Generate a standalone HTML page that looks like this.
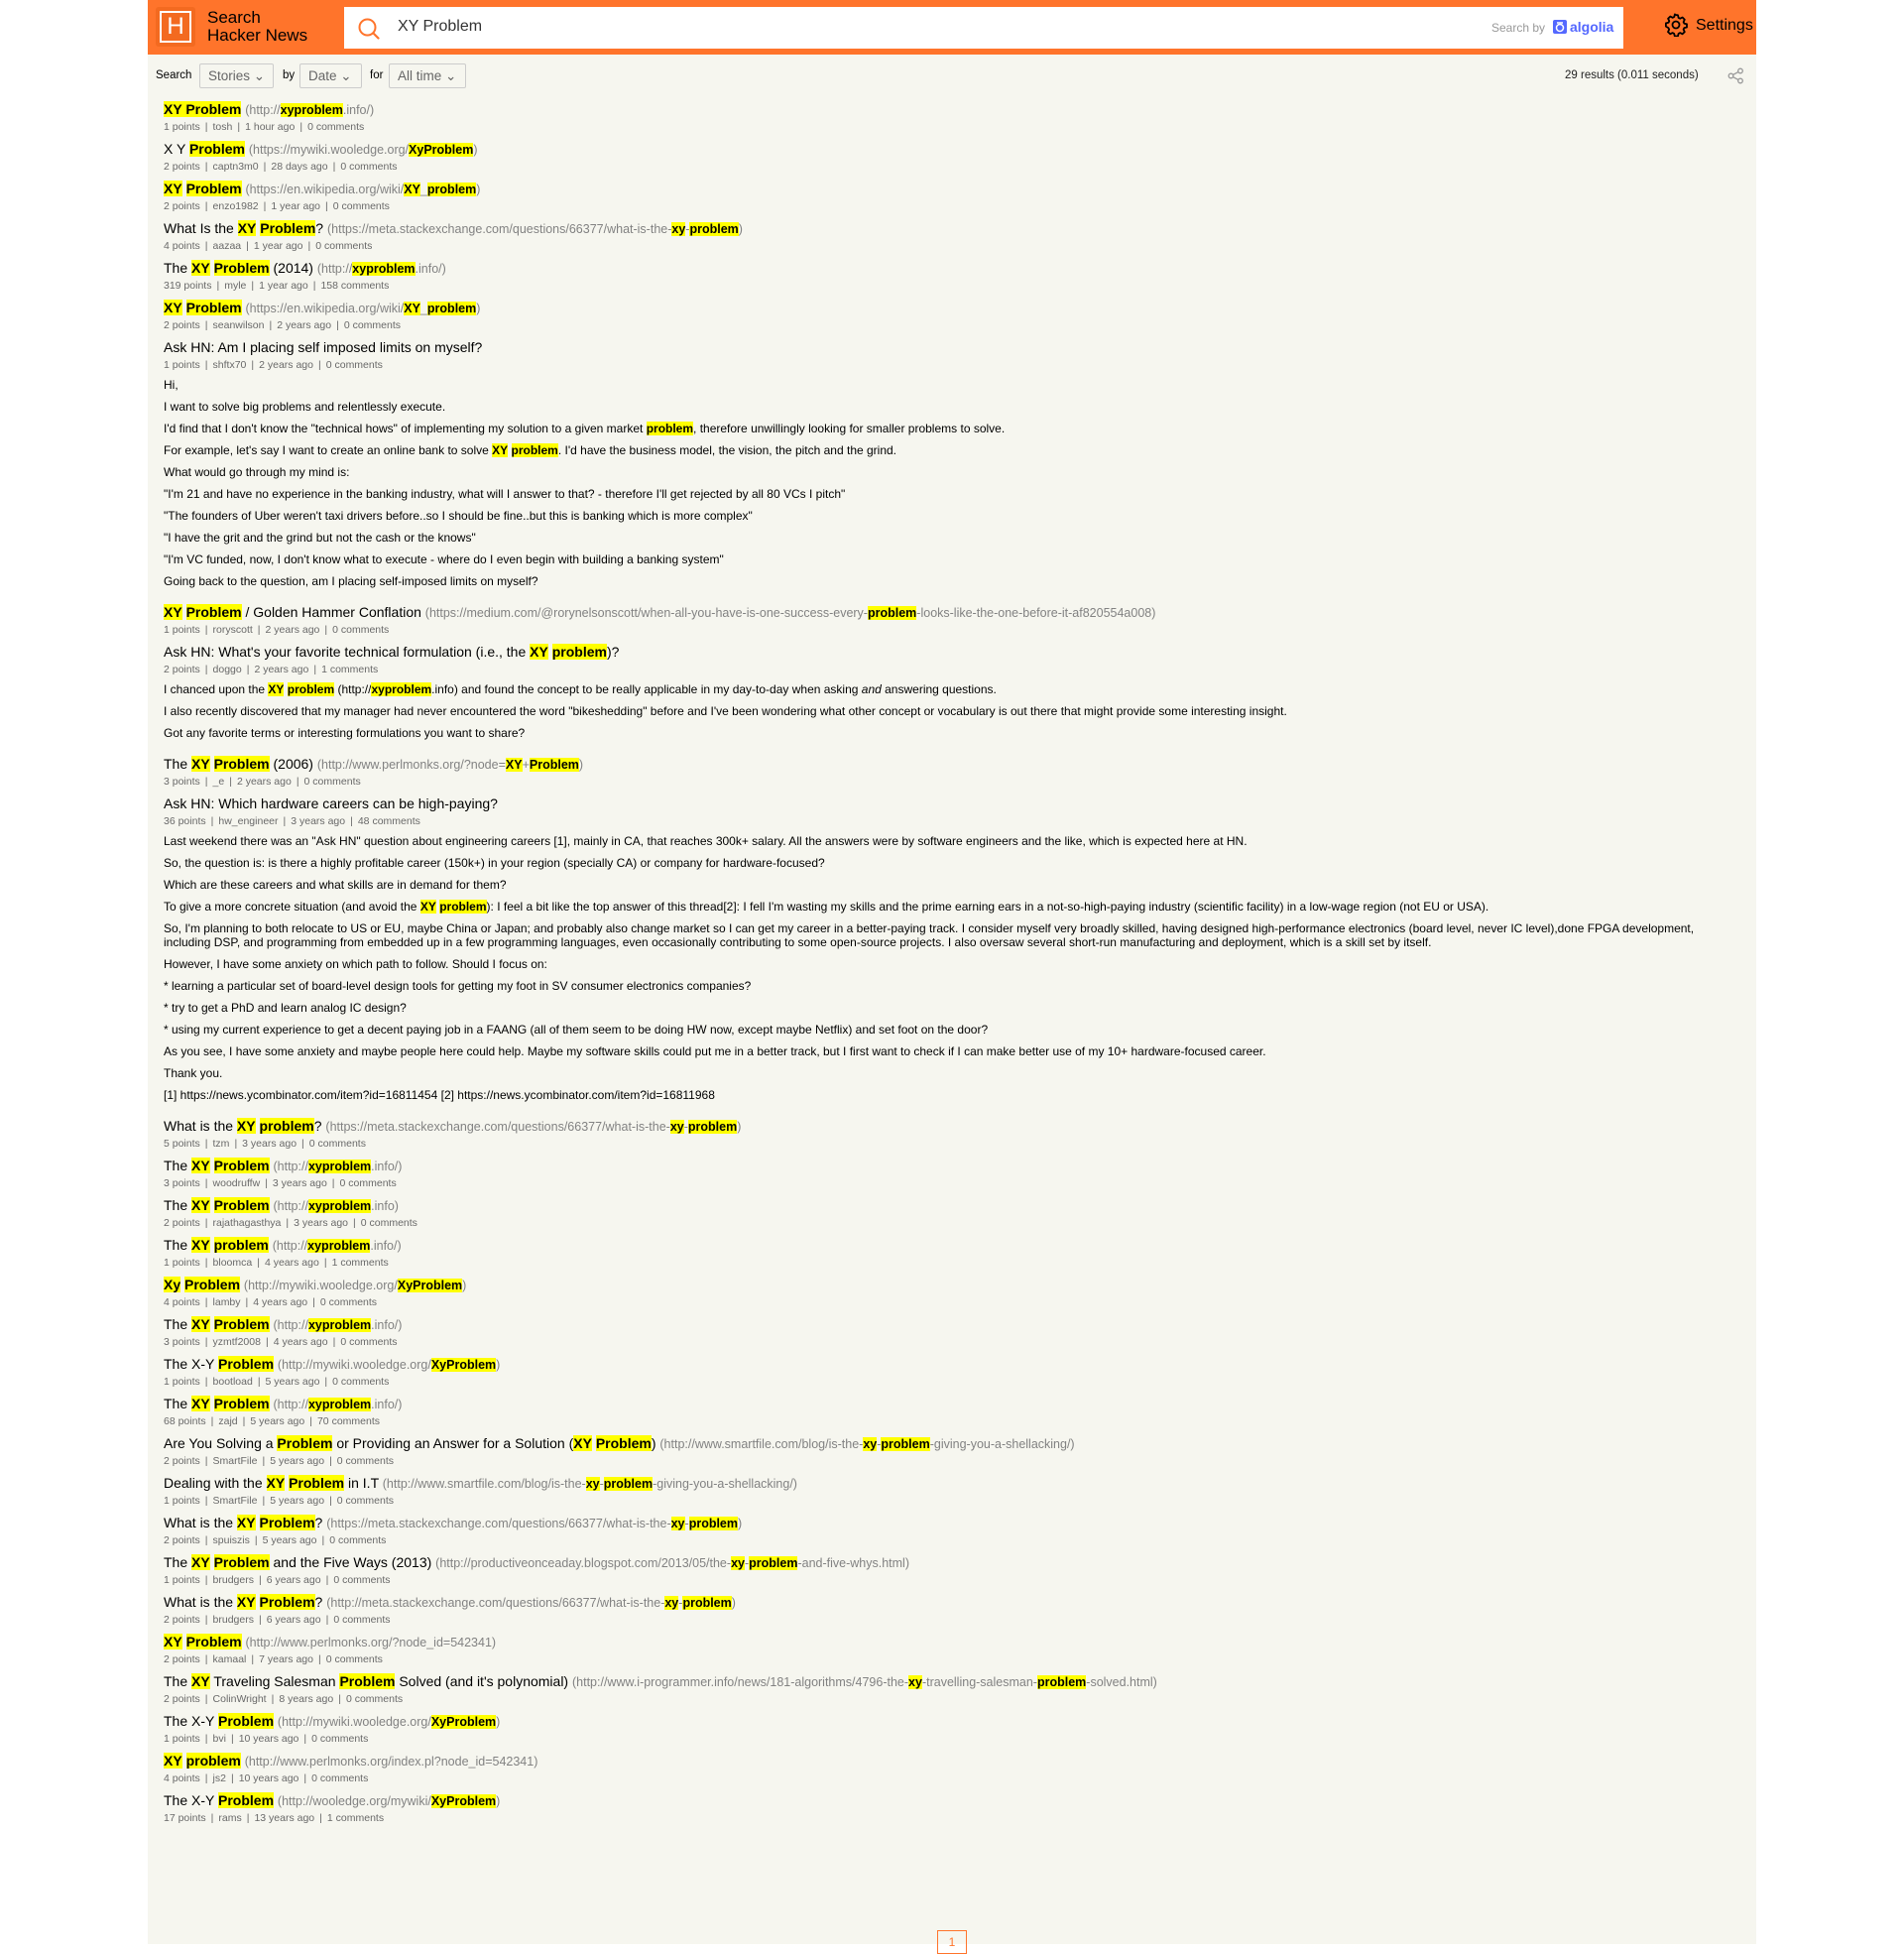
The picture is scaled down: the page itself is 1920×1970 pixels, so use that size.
<!DOCTYPE html>
<html><head><meta charset="utf-8"><style>
*{box-sizing:border-box;margin:0;padding:0}
body{width:1920px;height:1960px;background:#fff;font-family:"Liberation Sans",Arial,sans-serif;overflow:hidden}
#c{position:absolute;left:149px;top:0;width:1622px;height:1960px;background:#f6f6ef}
#hd{position:absolute;left:0;top:0;width:1622px;height:55px;background:#ff742b}
#logo{position:absolute;left:8px;top:7px;width:40px;height:40px;background:#f36a20;border-radius:3px}
#logo div{position:absolute;left:4px;top:4px;width:32px;height:32px;border:2px solid #fff;color:#fff;font-size:24px;line-height:28px;text-align:center}
#ttl{position:absolute;left:60px;top:9px;font-size:17px;line-height:18px;color:#000}
#sb{position:absolute;left:198px;top:7px;width:1290px;height:42px;background:#fff}
#sb .q{position:absolute;left:54px;top:11px;font-size:16px;color:#333}
#sb .by{position:absolute;left:1157px;top:14px;font-size:12px;color:#999}
#sb .alg{position:absolute;left:1219px;top:12px;font-size:14px;font-weight:bold;color:#5468ff}
#set{position:absolute;left:1529px;top:15px;font-size:16px;color:#000}
#set span{position:absolute;left:32px;top:2px}
#flt{position:absolute;left:8px;top:64px;height:25px;font-size:11.5px;color:#000}
.lbl{position:absolute;top:6px}
.sel{position:absolute;top:0;height:25px;border:1px solid #ccc;border-radius:2px;font-size:13.5px;color:#666;padding:4px 0 0 8px}
#res{position:absolute;left:1429px;top:70px;font-size:11.5px;color:#222}
#list{position:absolute;left:16px;top:99px;width:1590px}
.t{height:22px;line-height:22px;font-size:14px;color:#000;white-space:nowrap}
.u{font-size:12.5px;color:#828282}
.m{height:14px;line-height:14px;font-size:10.5px;color:#696969;margin-bottom:4px;white-space:nowrap}
.m i{font-style:normal;padding:0 5px}
em{font-style:normal;font-weight:bold;background:#ff0;color:#000}
.b{font-size:12px;color:#000;margin-bottom:13px}
.b p{line-height:14px;margin:0 0 8px;white-space:nowrap}
.b p:first-child{margin-top:6px}
#pg{position:absolute;left:796px;top:1946px;width:30px;height:24px;border:1px solid #ff742b;color:#ff742b;font-size:12px;text-align:center;padding-top:4px}
</style></head><body><div id="c">
<div id="hd">
<div id="logo"><div>H</div></div>
<div id="ttl">Search<br>Hacker News</div>
<div id="sb"><svg style="position:absolute;left:13px;top:10px" width="24" height="24" viewBox="0 0 24 24"><circle cx="10.5" cy="10.5" r="8" fill="none" stroke="#ff742b" stroke-width="2"/><path d="M16.5 16.5l5 5" stroke="#ff742b" stroke-width="2.2" stroke-linecap="round"/></svg><span class="q">XY Problem</span><span class="by">Search by</span><span class="alg"><svg width="14" height="14" viewBox="0 0 14 14" style="vertical-align:-2px;margin-right:3px"><rect width="14" height="14" rx="2" fill="#5468ff"/><circle cx="7" cy="8" r="3.5" fill="none" stroke="#fff" stroke-width="1.5"/><path d="M4 3h6" stroke="#fff" stroke-width="1.5"/></svg>algolia</span></div>
<div id="set"><svg width="24" height="24" viewBox="0 0 24 24" style="position:absolute;left:0;top:-2px"><path d="M12 2l2 .3.6 2.6 1.6.8 2.4-1.2 2.2 2.2-1.2 2.4.8 1.6 2.6.6v3.2l-2.6.6-.8 1.6 1.2 2.4-2.2 2.2-2.4-1.2-1.6.8-.6 2.6h-3.2l-.6-2.6-1.6-.8-2.4 1.2-2.2-2.2 1.2-2.4-.8-1.6L1.9 13.6v-3.2l2.6-.6.8-1.6-1.2-2.4 2.2-2.2 2.4 1.2 1.6-.8.6-2.6z" fill="none" stroke="#000" stroke-width="1.8" stroke-linejoin="round"/><circle cx="12" cy="12" r="3.5" fill="none" stroke="#000" stroke-width="1.8"/></svg><span>Settings</span></div>
</div>
<div id="flt"><span class="lbl" style="left:0">Search</span><div class="sel" style="left:44px;width:75px">Stories ⌄</div><span class="lbl" style="left:128px">by</span><div class="sel" style="left:145px;width:63px">Date ⌄</div><span class="lbl" style="left:216px">for</span><div class="sel" style="left:235px;width:78px">All time ⌄</div></div>
<div id="res">29 results (0.011 seconds)</div>
<svg style="position:absolute;left:1593px;top:68px" width="17" height="17" viewBox="0 0 17 17"><circle cx="13" cy="3.5" r="2.3" fill="none" stroke="#999" stroke-width="1.3"/><circle cx="13" cy="13.5" r="2.3" fill="none" stroke="#999" stroke-width="1.3"/><circle cx="3.5" cy="8.5" r="2.3" fill="none" stroke="#999" stroke-width="1.3"/><path d="M5.5 7.4l5.4-2.8M5.5 9.6l5.4 2.8" stroke="#999" stroke-width="1.3"/></svg>
<div id="list">
<div class="t"><em>XY Problem</em> <span class="u">(http://<em>xyproblem</em>.info/)</span></div><div class="m">1 points<i>|</i>tosh<i>|</i>1 hour ago<i>|</i>0 comments</div>
<div class="t">X Y <em>Problem</em> <span class="u">(https://mywiki.wooledge.org/<em>XyProblem</em>)</span></div><div class="m">2 points<i>|</i>captn3m0<i>|</i>28 days ago<i>|</i>0 comments</div>
<div class="t"><em>XY</em> <em>Problem</em> <span class="u">(https://en.wikipedia.org/wiki/<em>XY</em>_<em>problem</em>)</span></div><div class="m">2 points<i>|</i>enzo1982<i>|</i>1 year ago<i>|</i>0 comments</div>
<div class="t">What Is the <em>XY</em> <em>Problem</em>? <span class="u">(https://meta.stackexchange.com/questions/66377/what-is-the-<em>xy</em>-<em>problem</em>)</span></div><div class="m">4 points<i>|</i>aazaa<i>|</i>1 year ago<i>|</i>0 comments</div>
<div class="t">The <em>XY</em> <em>Problem</em> (2014) <span class="u">(http://<em>xyproblem</em>.info/)</span></div><div class="m">319 points<i>|</i>myle<i>|</i>1 year ago<i>|</i>158 comments</div>
<div class="t"><em>XY</em> <em>Problem</em> <span class="u">(https://en.wikipedia.org/wiki/<em>XY</em>_<em>problem</em>)</span></div><div class="m">2 points<i>|</i>seanwilson<i>|</i>2 years ago<i>|</i>0 comments</div>
<div class="t">Ask HN: Am I placing self imposed limits on myself?</div><div class="m">1 points<i>|</i>shftx70<i>|</i>2 years ago<i>|</i>0 comments</div>
<div class="b"><p>Hi,</p><p>I want to solve big problems and relentlessly execute.</p><p>I'd find that I don't know the "technical hows" of implementing my solution to a given market <em>problem</em>, therefore unwillingly looking for smaller problems to solve.</p><p>For example, let's say I want to create an online bank to solve <em>XY</em> <em>problem</em>. I'd have the business model, the vision, the pitch and the grind.</p><p>What would go through my mind is:</p><p>"I'm 21 and have no experience in the banking industry, what will I answer to that? - therefore I'll get rejected by all 80 VCs I pitch"</p><p>"The founders of Uber weren't taxi drivers before..so I should be fine..but this is banking which is more complex"</p><p>"I have the grit and the grind but not the cash or the knows"</p><p>"I'm VC funded, now, I don't know what to execute - where do I even begin with building a banking system"</p><p>Going back to the question, am I placing self-imposed limits on myself?</p></div>
<div class="t"><em>XY</em> <em>Problem</em> / Golden Hammer Conflation <span class="u">(https://medium.com/@rorynelsonscott/when-all-you-have-is-one-success-every-<em>problem</em>-looks-like-the-one-before-it-af820554a008)</span></div><div class="m">1 points<i>|</i>roryscott<i>|</i>2 years ago<i>|</i>0 comments</div>
<div class="t">Ask HN: What's your favorite technical formulation (i.e., the <em>XY</em> <em>problem</em>)?</div><div class="m">2 points<i>|</i>doggo<i>|</i>2 years ago<i>|</i>1 comments</div>
<div class="b"><p>I chanced upon the <em>XY</em> <em>problem</em> (http://<em>xyproblem</em>.info) and found the concept to be really applicable in my day-to-day when asking <i>and</i> answering questions.</p><p>I also recently discovered that my manager had never encountered the word "bikeshedding" before and I've been wondering what other concept or vocabulary is out there that might provide some interesting insight.</p><p>Got any favorite terms or interesting formulations you want to share?</p></div>
<div class="t">The <em>XY</em> <em>Problem</em> (2006) <span class="u">(http://www.perlmonks.org/?node=<em>XY</em>+<em>Problem</em>)</span></div><div class="m">3 points<i>|</i>_e<i>|</i>2 years ago<i>|</i>0 comments</div>
<div class="t">Ask HN: Which hardware careers can be high-paying?</div><div class="m">36 points<i>|</i>hw_engineer<i>|</i>3 years ago<i>|</i>48 comments</div>
<div class="b"><p>Last weekend there was an "Ask HN" question about engineering careers [1], mainly in CA, that reaches 300k+ salary. All the answers were by software engineers and the like, which is expected here at HN.</p><p>So, the question is: is there a highly profitable career (150k+) in your region (specially CA) or company for hardware-focused?</p><p>Which are these careers and what skills are in demand for them?</p><p>To give a more concrete situation (and avoid the <em>XY</em> <em>problem</em>): I feel a bit like the top answer of this thread[2]: I fell I'm wasting my skills and the prime earning ears in a not-so-high-paying industry (scientific facility) in a low-wage region (not EU or USA).</p><p>So, I'm planning to both relocate to US or EU, maybe China or Japan; and probably also change market so I can get my career in a better-paying track. I consider myself very broadly skilled, having designed high-performance electronics (board level, never IC level),done FPGA development,<br>including DSP, and programming from embedded up in a few programming languages, even occasionally contributing to some open-source projects. I also oversaw several short-run manufacturing and deployment, which is a skill set by itself.</p><p>However, I have some anxiety on which path to follow. Should I focus on:</p><p>* learning a particular set of board-level design tools for getting my foot in SV consumer electronics companies?</p><p>* try to get a PhD and learn analog IC design?</p><p>* using my current experience to get a decent paying job in a FAANG (all of them seem to be doing HW now, except maybe Netflix) and set foot on the door?</p><p>As you see, I have some anxiety and maybe people here could help. Maybe my software skills could put me in a better track, but I first want to check if I can make better use of my 10+ hardware-focused career.</p><p>Thank you.</p><p>[1] https://news.ycombinator.com/item?id=16811454 [2] https://news.ycombinator.com/item?id=16811968</p></div>
<div class="t">What is the <em>XY</em> <em>problem</em>? <span class="u">(https://meta.stackexchange.com/questions/66377/what-is-the-<em>xy</em>-<em>problem</em>)</span></div><div class="m">5 points<i>|</i>tzm<i>|</i>3 years ago<i>|</i>0 comments</div>
<div class="t">The <em>XY</em> <em>Problem</em> <span class="u">(http://<em>xyproblem</em>.info/)</span></div><div class="m">3 points<i>|</i>woodruffw<i>|</i>3 years ago<i>|</i>0 comments</div>
<div class="t">The <em>XY</em> <em>Problem</em> <span class="u">(http://<em>xyproblem</em>.info)</span></div><div class="m">2 points<i>|</i>rajathagasthya<i>|</i>3 years ago<i>|</i>0 comments</div>
<div class="t">The <em>XY</em> <em>problem</em> <span class="u">(http://<em>xyproblem</em>.info/)</span></div><div class="m">1 points<i>|</i>bloomca<i>|</i>4 years ago<i>|</i>1 comments</div>
<div class="t"><em>Xy</em> <em>Problem</em> <span class="u">(http://mywiki.wooledge.org/<em>XyProblem</em>)</span></div><div class="m">4 points<i>|</i>lamby<i>|</i>4 years ago<i>|</i>0 comments</div>
<div class="t">The <em>XY</em> <em>Problem</em> <span class="u">(http://<em>xyproblem</em>.info/)</span></div><div class="m">3 points<i>|</i>yzmtf2008<i>|</i>4 years ago<i>|</i>0 comments</div>
<div class="t">The X-Y <em>Problem</em> <span class="u">(http://mywiki.wooledge.org/<em>XyProblem</em>)</span></div><div class="m">1 points<i>|</i>bootload<i>|</i>5 years ago<i>|</i>0 comments</div>
<div class="t">The <em>XY</em> <em>Problem</em> <span class="u">(http://<em>xyproblem</em>.info/)</span></div><div class="m">68 points<i>|</i>zajd<i>|</i>5 years ago<i>|</i>70 comments</div>
<div class="t">Are You Solving a <em>Problem</em> or Providing an Answer for a Solution (<em>XY</em> <em>Problem</em>) <span class="u">(http://www.smartfile.com/blog/is-the-<em>xy</em>-<em>problem</em>-giving-you-a-shellacking/)</span></div><div class="m">2 points<i>|</i>SmartFile<i>|</i>5 years ago<i>|</i>0 comments</div>
<div class="t">Dealing with the <em>XY</em> <em>Problem</em> in I.T <span class="u">(http://www.smartfile.com/blog/is-the-<em>xy</em>-<em>problem</em>-giving-you-a-shellacking/)</span></div><div class="m">1 points<i>|</i>SmartFile<i>|</i>5 years ago<i>|</i>0 comments</div>
<div class="t">What is the <em>XY</em> <em>Problem</em>? <span class="u">(https://meta.stackexchange.com/questions/66377/what-is-the-<em>xy</em>-<em>problem</em>)</span></div><div class="m">2 points<i>|</i>spuiszis<i>|</i>5 years ago<i>|</i>0 comments</div>
<div class="t">The <em>XY</em> <em>Problem</em> and the Five Ways (2013) <span class="u">(http://productiveonceaday.blogspot.com/2013/05/the-<em>xy</em>-<em>problem</em>-and-five-whys.html)</span></div><div class="m">1 points<i>|</i>brudgers<i>|</i>6 years ago<i>|</i>0 comments</div>
<div class="t">What is the <em>XY</em> <em>Problem</em>? <span class="u">(http://meta.stackexchange.com/questions/66377/what-is-the-<em>xy</em>-<em>problem</em>)</span></div><div class="m">2 points<i>|</i>brudgers<i>|</i>6 years ago<i>|</i>0 comments</div>
<div class="t"><em>XY</em> <em>Problem</em> <span class="u">(http://www.perlmonks.org/?node_id=542341)</span></div><div class="m">2 points<i>|</i>kamaal<i>|</i>7 years ago<i>|</i>0 comments</div>
<div class="t">The <em>XY</em> Traveling Salesman <em>Problem</em> Solved (and it's polynomial) <span class="u">(http://www.i-programmer.info/news/181-algorithms/4796-the-<em>xy</em>-travelling-salesman-<em>problem</em>-solved.html)</span></div><div class="m">2 points<i>|</i>ColinWright<i>|</i>8 years ago<i>|</i>0 comments</div>
<div class="t">The X-Y <em>Problem</em> <span class="u">(http://mywiki.wooledge.org/<em>XyProblem</em>)</span></div><div class="m">1 points<i>|</i>bvi<i>|</i>10 years ago<i>|</i>0 comments</div>
<div class="t"><em>XY</em> <em>problem</em> <span class="u">(http://www.perlmonks.org/index.pl?node_id=542341)</span></div><div class="m">4 points<i>|</i>js2<i>|</i>10 years ago<i>|</i>0 comments</div>
<div class="t">The X-Y <em>Problem</em> <span class="u">(http://wooledge.org/mywiki/<em>XyProblem</em>)</span></div><div class="m">17 points<i>|</i>rams<i>|</i>13 years ago<i>|</i>1 comments</div>
</div>
<div id="pg">1</div>
</div></body></html>
